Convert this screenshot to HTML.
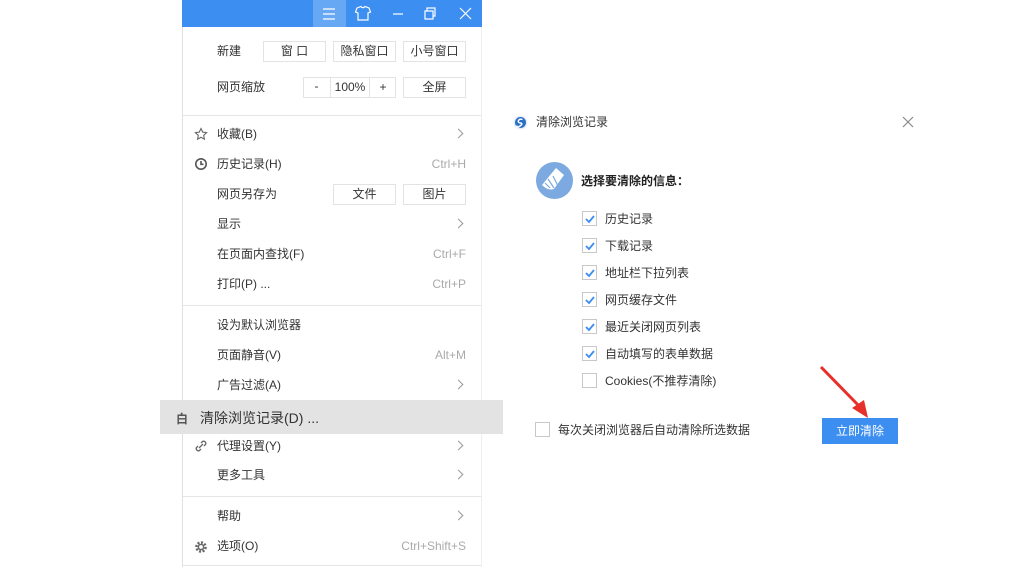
<!DOCTYPE html>
<html><head><meta charset="utf-8"><style>
*{margin:0;padding:0;box-sizing:border-box}
body{width:1024px;height:567px;background:#fff;position:relative;overflow:hidden;font-family:"Liberation Sans","Noto Sans CJK SC",sans-serif;font-size:12px;color:#333}
.a{position:absolute;white-space:nowrap}
.t{position:absolute;left:217px;line-height:14px;color:#333}
.r{position:absolute;right:558px;color:#aaa;line-height:14px}
.arr{position:absolute;left:455px;width:7px;height:7px;border-right:1px solid #999;border-top:1px solid #999;transform:rotate(45deg)}
.btn{position:absolute;border:1px solid #e3e3e3;height:21px;line-height:19px;text-align:center;color:#333}
.sep{position:absolute;left:183px;width:298px;height:1px;background:#e6e6e6}
.cb{position:absolute;left:582px;width:15px;height:15px;border:1px solid #c8c8c8;background:#fff}
.cb svg{position:absolute;left:1px;top:1px}
.cl{position:absolute;left:605px;line-height:14px;color:#333}
</style></head><body>
<div class="a" style="left:182px;top:0;width:300px;height:27px;background:#3c8ef0"></div>
<div class="a" style="left:313px;top:0;width:33px;height:27px;background:#66a8f4"></div>
<svg class="a" style="left:182px;top:0" width="300" height="27" stroke="#fff" fill="none" stroke-width="1.2">
<path d="M141 9h12M141 14h12M141 19h12"/>
<path d="M175 8l4-1.5q2 2.5 4 0l4 1.5 1.5 4-2.5 1v7h-10v-7l-2.5-1z"/>
<path d="M211 14h10"/>
<path d="M243 11h8v8h-8zM245 11V8h8v8h-2"/>
<path d="M278 8l11 11M289 8l-11 11"/>
</svg>
<div class="a" style="left:182px;top:27px;width:1px;height:540px;background:#e0e0e0"></div>
<div class="a" style="left:481px;top:27px;width:1px;height:540px;background:#eee"></div>
<div class="t" style="top:44px">新建</div>
<div class="btn" style="left:263px;top:41px;width:63px">窗 口</div>
<div class="btn" style="left:333px;top:41px;width:63px">隐私窗口</div>
<div class="btn" style="left:403px;top:41px;width:63px">小号窗口</div>
<div class="t" style="top:80px">网页缩放</div>
<div class="btn" style="left:303px;top:77px;width:93px"></div>
<div class="a" style="left:303px;top:79px;width:27px;text-align:center">-</div>
<div class="a" style="left:330px;top:77px;width:40px;height:21px;border-left:1px solid #e3e3e3;border-right:1px solid #e3e3e3;text-align:center;line-height:21px">100%</div>
<div class="a" style="left:370px;top:80px;width:26px;text-align:center">+</div>
<div class="btn" style="left:403px;top:77px;width:63px">全屏</div>
<div class="sep" style="top:115px"></div>
<svg class="a" style="left:194px;top:127px" width="14" height="14" fill="none" stroke="#666" stroke-width="1.1"><path d="M7 1.5l1.7 3.6 3.9.5-2.9 2.7.7 3.9L7 10.3l-3.4 1.9.7-3.9L1.4 5.6l3.9-.5z"/></svg>
<div class="t" style="top:127px">收藏(B)</div><div class="arr" style="top:130px"></div>
<svg class="a" style="left:194px;top:157px" width="14" height="14" fill="none" stroke="#555" stroke-width="1.6"><circle cx="7" cy="7" r="5.2"/><path d="M7 4v3.3h2.5"/></svg>
<div class="t" style="top:157px">历史记录(H)</div><div class="r" style="top:157px">Ctrl+H</div>
<div class="t" style="top:187px">网页另存为</div>
<div class="btn" style="left:333px;top:184px;width:63px">文件</div>
<div class="btn" style="left:403px;top:184px;width:63px">图片</div>
<div class="t" style="top:217px">显示</div><div class="arr" style="top:220px"></div>
<div class="t" style="top:247px">在页面内查找(F)</div><div class="r" style="top:247px">Ctrl+F</div>
<div class="t" style="top:277px">打印(P) ...</div><div class="r" style="top:277px">Ctrl+P</div>
<div class="sep" style="top:305px"></div>
<div class="t" style="top:318px">设为默认浏览器</div>
<div class="t" style="top:348px">页面静音(V)</div><div class="r" style="top:348px">Alt+M</div>
<div class="t" style="top:378px">广告过滤(A)</div><div class="arr" style="top:381px"></div>
<div class="a" style="left:160px;top:400px;width:343px;height:34px;background:#e3e3e3"></div>
<div class="a" style="left:176px;top:410px;font-size:12px;color:#555;font-weight:bold">白</div>
<div class="a" style="left:200px;top:408px;font-size:14px;color:#333">清除浏览记录(D) ...</div>
<svg class="a" style="left:194px;top:439px" width="14" height="14" fill="none" stroke="#666" stroke-width="1.3"><path d="M5 9l4-4M4 7l-1.5 1.5a2.2 2.2 0 0 0 3 3L7 10M10 7l1.5-1.5a2.2 2.2 0 0 0-3-3L7 4"/></svg>
<div class="t" style="top:439px">代理设置(Y)</div><div class="arr" style="top:442px"></div>
<div class="t" style="top:468px">更多工具</div><div class="arr" style="top:471px"></div>
<div class="sep" style="top:496px"></div>
<div class="t" style="top:509px">帮助</div><div class="arr" style="top:512px"></div>
<svg class="a" style="left:194px;top:540px" width="14" height="14"><circle cx="7" cy="7" r="4.5" fill="none" stroke="#666" stroke-width="2.6" stroke-dasharray="2 1.5"/><circle cx="7" cy="7" r="2.6" fill="none" stroke="#666" stroke-width="1.4"/></svg>
<div class="t" style="top:539px">选项(O)</div><div class="r" style="top:539px">Ctrl+Shift+S</div>
<div class="a" style="left:183px;top:565px;width:298px;height:1px;background:#e6e6e6"></div>

<svg class="a" style="left:513px;top:115px" width="15" height="15"><circle cx="7.5" cy="7.5" r="7" fill="#e8eef6"/><circle cx="7.5" cy="7.5" r="5.5" fill="#2c6fc6"/><path d="M9.5 4.5q-3-1-4 1t2 2.5-0.5 3-3-0.5" stroke="#fff" stroke-width="1.4" fill="none"/></svg>
<div class="a" style="left:536px;top:115px;font-size:12px;line-height:14px">清除浏览记录</div>
<svg class="a" style="left:902px;top:116px" width="12" height="12" stroke="#888" stroke-width="1.2"><path d="M1 1l10 10M11 1L1 11"/></svg>
<svg class="a" style="left:536px;top:162px" width="37" height="37"><circle cx="18.5" cy="18.5" r="18.5" fill="#7ba9e0"/><path d="M20 6l8 7-10 14q-6 2-12-4z" fill="#fff"/><path d="M17 14l5 10M12 17l6 9M9 21l5 5" stroke="#7ba9e0" stroke-width="1.2"/></svg>
<div class="a" style="left:581px;top:174px;font-weight:bold;font-size:12px;line-height:14px;color:#222">选择要清除的信息：</div>
<div class="cb" style="top:211px"><svg width="12" height="12" fill="none" stroke="#3c8ef0" stroke-width="1.8"><path d="M2 6l3 3 5-6"/></svg></div><div class="cl" style="top:212px">历史记录</div>
<div class="cb" style="top:238px"><svg width="12" height="12" fill="none" stroke="#3c8ef0" stroke-width="1.8"><path d="M2 6l3 3 5-6"/></svg></div><div class="cl" style="top:239px">下载记录</div>
<div class="cb" style="top:265px"><svg width="12" height="12" fill="none" stroke="#3c8ef0" stroke-width="1.8"><path d="M2 6l3 3 5-6"/></svg></div><div class="cl" style="top:266px">地址栏下拉列表</div>
<div class="cb" style="top:292px"><svg width="12" height="12" fill="none" stroke="#3c8ef0" stroke-width="1.8"><path d="M2 6l3 3 5-6"/></svg></div><div class="cl" style="top:293px">网页缓存文件</div>
<div class="cb" style="top:319px"><svg width="12" height="12" fill="none" stroke="#3c8ef0" stroke-width="1.8"><path d="M2 6l3 3 5-6"/></svg></div><div class="cl" style="top:320px">最近关闭网页列表</div>
<div class="cb" style="top:346px"><svg width="12" height="12" fill="none" stroke="#3c8ef0" stroke-width="1.8"><path d="M2 6l3 3 5-6"/></svg></div><div class="cl" style="top:347px">自动填写的表单数据</div>
<div class="cb" style="top:373px"></div><div class="cl" style="top:374px">Cookies(不推荐清除)</div>
<div class="cb" style="left:535px;top:422px"></div>
<div class="a" style="left:558px;top:423px;line-height:14px">每次关闭浏览器后自动清除所选数据</div>
<div class="a" style="left:822px;top:418px;width:76px;height:26px;background:#3c8ef0;color:#fff;text-align:center;line-height:26px">立即清除</div>
<svg class="a" style="left:815px;top:362px" width="60" height="60"><path d="M6 5L46 46" stroke="#e8302a" stroke-width="3"/><path d="M53 56L37 46 49 38z" fill="#e8302a"/></svg>
</body></html>
